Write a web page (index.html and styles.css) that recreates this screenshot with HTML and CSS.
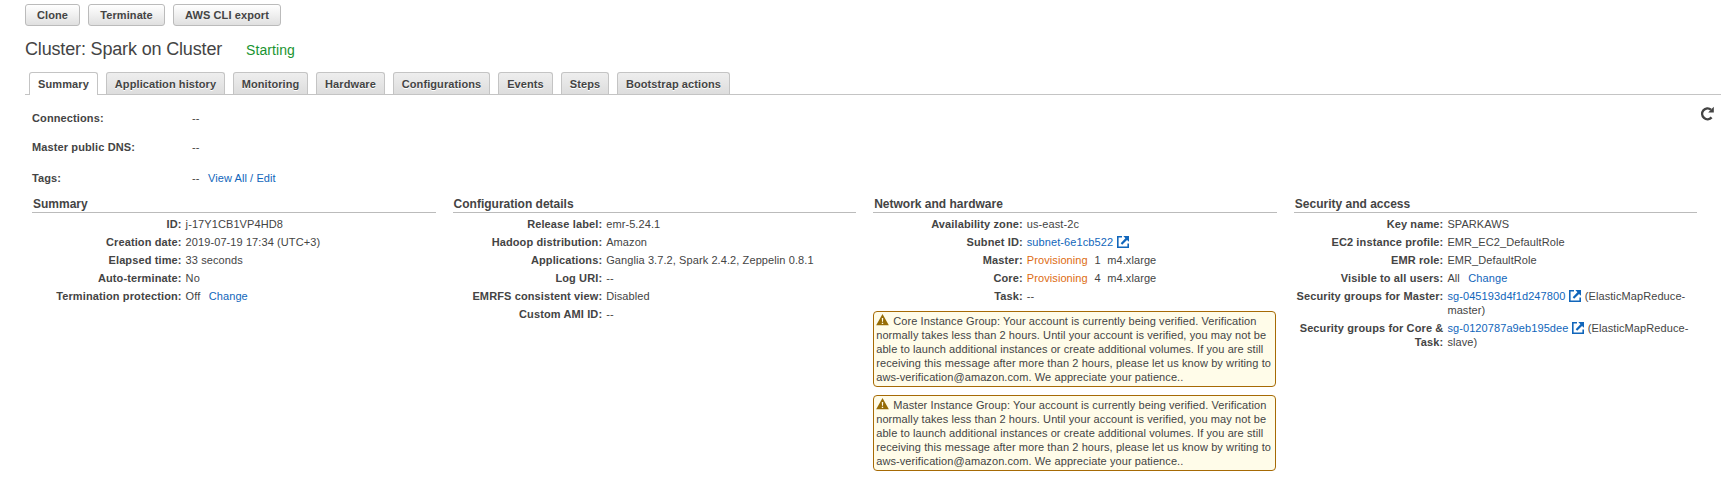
FILE: index.html
```
<!DOCTYPE html>
<html lang="en">
<head>
<meta charset="utf-8">
<title>Cluster: Spark on Cluster</title>
<link rel="stylesheet" href="styles.css">
</head>
<body>
<svg class="defs" width="0" height="0">
  <symbol id="ext" viewBox="0 0 12 12"><path d="M5 .8H.8v10.4h10.4V7.5" fill="none" stroke="currentColor" stroke-width="1.6"/><path d="M6.3 0H12v5.7L10 3.9 5.2 8.7 3.7 7.2 8.4 2.2z" fill="currentColor"/></symbol>
  <symbol id="warn" viewBox="0 0 13 12"><path d="M6.5 0 12.8 11.2H.2z" fill="#966c06"/><path d="M5.8 4h1.4L7 7.8H6zM5.8 8.7h1.4V10H5.8z" fill="#fffce9"/></symbol>
</svg>
<div class="toolbar">
  <button class="btn w-clone">Clone</button>
  <button class="btn w-term">Terminate</button>
  <button class="btn w-cli">AWS CLI export</button>
</div>
<header class="heading"><h1>Cluster: Spark on Cluster</h1><span class="state">Starting</span></header>
<nav class="tabs">
  <a class="tab active w-sum">Summary</a>
  <a class="tab w-app">Application history</a>
  <a class="tab w-mon">Monitoring</a>
  <a class="tab w-hw">Hardware</a>
  <a class="tab w-conf">Configurations</a>
  <a class="tab w-ev">Events</a>
  <a class="tab w-steps">Steps</a>
  <a class="tab w-boot">Bootstrap actions</a>
</nav>
<section class="top">
  <dl class="fields">
    <dt>Connections:</dt><dd>--</dd>
    <dt>Master public DNS:</dt><dd>--</dd>
    <dt>Tags:</dt><dd>--<a class="gap">View All / Edit</a></dd>
  </dl>
  <svg class="refresh" viewBox="0 0 14 15"><path d="M11.6 11.4A5.4 5.4 0 1 1 11 3.6" fill="none" stroke="#444" stroke-width="2.5"/><path d="M13.8.8v5.6H8.2z" fill="#444"/></svg>
</section>
<main class="columns">
  <section>
    <h2>Summary</h2>
    <dl class="rows">
      <dt>ID:</dt><dd>j-17Y1CB1VP4HD8</dd>
      <dt>Creation date:</dt><dd>2019-07-19 17:34 (UTC+3)</dd>
      <dt>Elapsed time:</dt><dd>33 seconds</dd>
      <dt>Auto-terminate:</dt><dd>No</dd>
      <dt>Termination protection:</dt><dd>Off<a class="gap">Change</a></dd>
    </dl>
  </section>
  <section>
    <h2>Configuration details</h2>
    <dl class="rows">
      <dt>Release label:</dt><dd>emr-5.24.1</dd>
      <dt>Hadoop distribution:</dt><dd>Amazon</dd>
      <dt>Applications:</dt><dd>Ganglia 3.7.2, Spark 2.4.2, Zeppelin 0.8.1</dd>
      <dt>Log URI:</dt><dd>--</dd>
      <dt>EMRFS consistent view:</dt><dd>Disabled</dd>
      <dt>Custom AMI ID:</dt><dd>--</dd>
    </dl>
  </section>
  <section>
    <h2>Network and hardware</h2>
    <dl class="rows">
      <dt>Availability zone:</dt><dd>us-east-2c</dd>
      <dt>Subnet ID:</dt><dd><a>subnet-6e1cb522</a> <svg class="ext"><use href="#ext"/></svg></dd>
      <dt>Master:</dt><dd><span class="prov">Provisioning</span><span class="count">1</span>m4.xlarge</dd>
      <dt>Core:</dt><dd><span class="prov">Provisioning</span><span class="count">4</span>m4.xlarge</dd>
      <dt>Task:</dt><dd>--</dd>
    </dl>
    <div class="alert"><svg class="warn"><use href="#warn"/></svg>Core Instance Group: Your account is currently being verified. Verification<br>normally takes less than 2 hours. Until your account is verified, you may not be<br>able to launch additional instances or create additional volumes. If you are still<br>receiving this message after more than 2 hours, please let us know by writing to<br>aws-verification@amazon.com. We appreciate your patience..</div>
    <div class="alert"><svg class="warn"><use href="#warn"/></svg>Master Instance Group: Your account is currently being verified. Verification<br>normally takes less than 2 hours. Until your account is verified, you may not be<br>able to launch additional instances or create additional volumes. If you are still<br>receiving this message after more than 2 hours, please let us know by writing to<br>aws-verification@amazon.com. We appreciate your patience..</div>
  </section>
  <section>
    <h2>Security and access</h2>
    <dl class="rows">
      <dt>Key name:</dt><dd>SPARKAWS</dd>
      <dt>EC2 instance profile:</dt><dd>EMR_EC2_DefaultRole</dd>
      <dt>EMR role:</dt><dd>EMR_DefaultRole</dd>
      <dt>Visible to all users:</dt><dd>All<a class="gap">Change</a></dd>
      <dt>Security groups for Master:</dt><dd><a>sg-045193d4f1d247800</a> <svg class="ext"><use href="#ext"/></svg> (ElasticMapReduce-<br>master)</dd>
      <dt>Security groups for Core &amp;<br>Task:</dt><dd><a>sg-0120787a9eb195dee</a> <svg class="ext"><use href="#ext"/></svg> (ElasticMapReduce-<br>slave)</dd>
    </dl>
  </section>
</main>
</body>
</html>
```
FILE: styles.css
```
* { box-sizing: border-box; }
body { margin: 0; padding: 4px 0 0 25px; height: 485px; overflow: hidden; background: #fff; color: #444; font: 11px/14px "Liberation Sans", Arial, sans-serif; letter-spacing: .09px; }
h1, h2, dl, dd { margin: 0; }
dt { font-weight: bold; letter-spacing: .12px; }
a { color: #1166bb; }
.defs { position: absolute; }
.toolbar { display: flex; gap: 8px; height: 22px; }
.btn { padding: 0; border: 1px solid #bbb; border-radius: 3px; background: linear-gradient(#fff, #e0e0e0); color: #444; font: bold 11px/18px "Liberation Sans", Arial, sans-serif; letter-spacing: .1px; white-space: nowrap; }
.w-clone { width: 55px; }
.w-term { width: 77px; }
.w-cli { width: 108px; }
.heading { display: flex; align-items: baseline; gap: 24px; height: 46px; padding-top: 12px; }
h1 { width: 197px; font-size: 18px; line-height: 22px; font-weight: normal; letter-spacing: -.16px; white-space: nowrap; }
.state { color: #1a9431; font-size: 14px; }
.tabs { display: flex; gap: 8px; width: 1696px; height: 23px; padding-left: 4px; border-bottom: 1px solid #c4c4c4; }
.tab { height: 22px; border: 1px solid #c4c4c4; border-bottom: 0; border-radius: 3px 3px 0 0; background: linear-gradient(#eee, #ddd); color: #444; font-weight: bold; line-height: 22px; text-align: center; white-space: nowrap; text-shadow: 0 1px #fff; }
.tab.active { height: 23px; background: #fff; }
.w-sum { width: 69px; }
.w-app { width: 119px; }
.w-mon { width: 75px; }
.w-hw { width: 69px; }
.w-conf { width: 97px; }
.w-ev { width: 55px; }
.w-steps { width: 48px; }
.w-boot { width: 113px; }
.top { display: flex; justify-content: space-between; height: 103px; padding: 16px 12px 0 7px; }
.fields { display: grid; grid-template-columns: 160px 300px; grid-template-rows: 29px 31px 14px; }
.refresh { width: 14px; height: 15px; margin-top: -5px; }
.columns { display: grid; grid-template-columns: repeat(4, 403.5px); gap: 17.1px; padding-left: 7px; }
h2 { height: 15px; margin-bottom: 4px; padding-left: 1px; border-bottom: 1px solid #bbb; font-size: 12px; line-height: 12px; letter-spacing: 0; }
.rows { display: grid; grid-template-columns: 149.6px 1fr; column-gap: 4px; row-gap: 4px; white-space: nowrap; }
.rows dt { text-align: right; }
.gap { margin-left: 8.4px; }
.ext { width: 12px; height: 12px; margin: 0 .5px; vertical-align: -2px; color: #1166bb; }
.prov { color: #dd6b10; }
.count { margin: 0 6.6px; }
.alert { width: 403px; height: 76px; margin: 8px 0 8px; padding: 2px; border: 1px solid #a66a05; border-radius: 4px; background: #fffce9; white-space: nowrap; }
.warn { width: 13px; height: 12px; margin-right: 4px; vertical-align: -1px; }
```
